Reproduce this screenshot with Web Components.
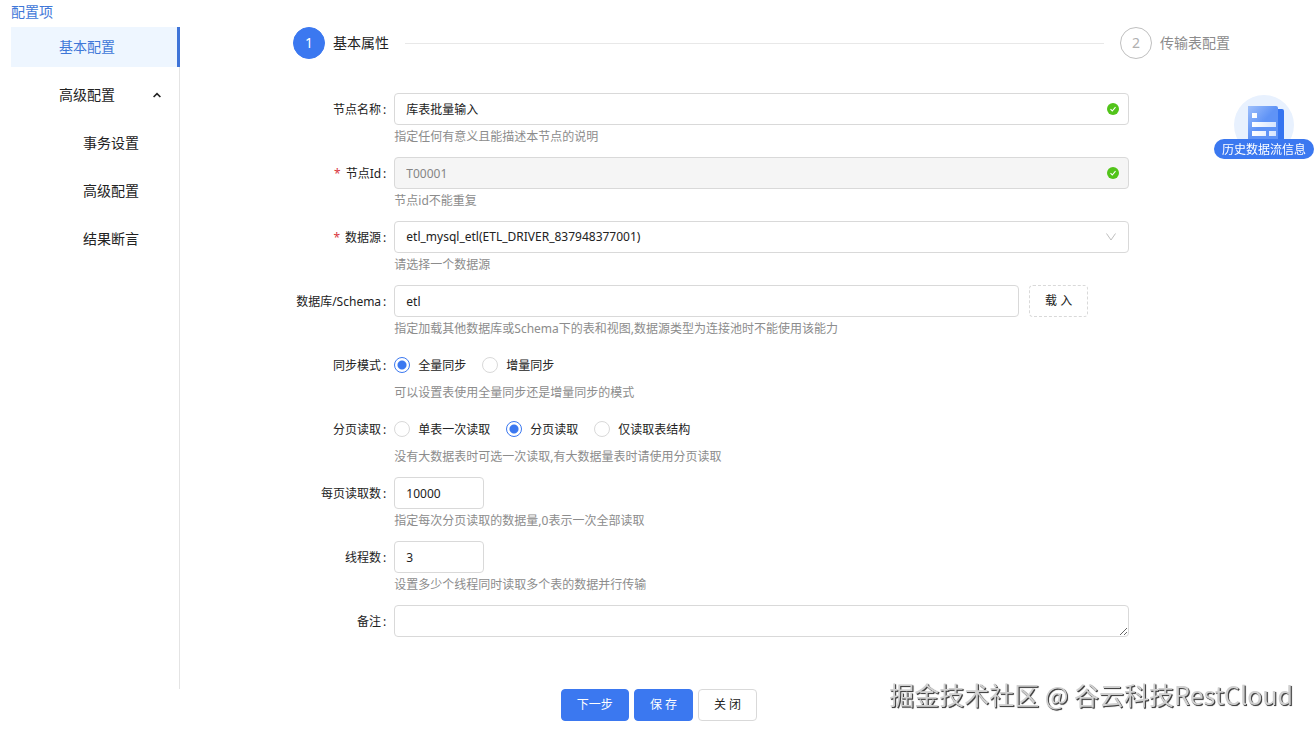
<!DOCTYPE html>
<html lang="zh-CN">
<head>
<meta charset="utf-8">
<title>基本配置</title>
<style>
  body {
    margin: 0;
    background: #fff;
    color: #222;
    font-family: "Noto Sans", "Noto Sans CJK SC", sans-serif;
    font-size: 12px;
    line-height: 24px;
  }
</style>
</head>
<body>
<config-page>
  <side-menu slot="side" heading="配置项">
    <menu-entry active>基本配置</menu-entry>
    <menu-entry arrow>高级配置</menu-entry>
    <menu-entry sub>事务设置</menu-entry>
    <menu-entry sub>高级配置</menu-entry>
    <menu-entry sub>结果断言</menu-entry>
  </side-menu>

  <step-bar></step-bar>
  <text-field label="节点名称" value="库表批量输入" help="指定任何有意义且能描述本节点的说明" valid></text-field>
  <text-field label="节点Id" value="T00001" help="节点id不能重复" required valid disabled></text-field>
  <select-field label="数据源" value="etl_mysql_etl(ETL_DRIVER_837948377001)" help="请选择一个数据源" required></select-field>
  <text-field label="数据库/Schema" value="etl" help="指定加载其他数据库或Schema下的表和视图,数据源类型为连接池时不能使用该能力" action="载 入"></text-field>
  <radio-field label="同步模式" options="全量同步,增量同步" checked="0" help="可以设置表使用全量同步还是增量同步的模式"></radio-field>
  <radio-field label="分页读取" options="单表一次读取,分页读取,仅读取表结构" checked="1" help="没有大数据表时可选一次读取,有大数据量表时请使用分页读取"></radio-field>
  <text-field label="每页读取数" value="10000" help="指定每次分页读取的数据量,0表示一次全部读取" short></text-field>
  <text-field label="线程数" value="3" help="设置多少个线程同时读取多个表的数据并行传输" short></text-field>
  <area-field label="备注"></area-field>

  <ui-button slot="footer" kind="primary">下一步</ui-button>
  <ui-button slot="footer" kind="primary">保 存</ui-button>
  <ui-button slot="footer">关 闭</ui-button>
</config-page>
<history-badge>历史数据流信息</history-badge>
<water-mark>掘金技术社区 @ 谷云科技RestCloud</water-mark>

<script>
class ConfigPage extends HTMLElement {
  connectedCallback() {
    this.attachShadow({ mode: 'open' });
    this.shadowRoot.innerHTML = `
      <style>
        :host {
          display: flex;
          flex-direction: column;
          min-height: 100vh;
        }

        .body {
          flex: 1;
          display: flex;
        }

        main {
          flex: 1;
          padding-top: 27px;
        }

        footer {
          display: flex;
          justify-content: center;
          gap: 5px;
          padding: 0 0 10px 2px;
        }
      </style>
      <div class="body">
        <slot name="side"></slot>
        <main><slot></slot></main>
      </div>
      <footer><slot name="footer"></slot></footer>
    `;
  }
}

class SideMenu extends HTMLElement {
  connectedCallback() {
    this.attachShadow({ mode: 'open' });
    this.shadowRoot.innerHTML = `
      <style>
        :host {
          display: flex;
          flex-direction: column;
          width: 169px;
          padding-left: 11px;
          font-size: 14px;
        }

        .heading {
          padding-bottom: 3px;
          color: #3f78d8;
          line-height: 24px;
        }

        nav {
          flex: 1;
          display: flex;
          flex-direction: column;
          gap: 8px;
          box-shadow: inset -1px 0 #e4e4e4;
        }
      </style>
      <div class="heading">${this.getAttribute('heading')}</div>
      <nav><slot></slot></nav>
    `;
  }
}

class MenuEntry extends HTMLElement {
  connectedCallback() {
    const arrow = this.hasAttribute('arrow')
      ? `<svg width="10" height="10" viewBox="0 0 10 10" fill="none" stroke="#222" stroke-width="1.6">
           <path d="M1.6 7L5 3.6L8.4 7"/>
         </svg>`
      : '';
    this.attachShadow({ mode: 'open' });
    this.shadowRoot.innerHTML = `
      <style>
        :host {
          display: block;
        }

        a {
          display: flex;
          align-items: center;
          justify-content: space-between;
          height: 40px;
          padding: 0 18px 0 48px;
          color: #222;
          text-decoration: none;
        }

        :host([sub]) a {
          padding-left: 72px;
        }

        :host([active]) a {
          background: #eef6ff;
          color: #3f78d8;
          border-right: 3px solid #3f74d8;
          padding-right: 15px;
        }
      </style>
      <a href="#"><slot></slot>${arrow}</a>
    `;
  }
}

class StepBar extends HTMLElement {
  connectedCallback() {
    this.attachShadow({ mode: 'open' });
    this.shadowRoot.innerHTML = `
      <style>
        :host {
          display: flex;
          align-items: center;
          margin: 0 86px 34px 113px;
          font-size: 14px;
        }

        .num {
          box-sizing: border-box;
          width: 32px;
          height: 32px;
          margin-right: 8px;
          border: 1px solid #bfbfbf;
          border-radius: 50%;
          line-height: 30px;
          text-align: center;
          color: #b0b0b0;
        }

        .num.on {
          background: #3b78f0;
          border-color: #3b78f0;
          color: #fff;
        }

        .line {
          flex: 1;
          height: 1px;
          margin: 0 16px;
          background: #e8e8e8;
        }

        .wait {
          color: #8c8c8c;
        }
      </style>
      <span class="num on">1</span><span>基本属性</span>
      <span class="line"></span>
      <span class="num">2</span><span class="wait">传输表配置</span>
    `;
  }
}

// Shared row: label column, control column, help text under the control
class FormField extends HTMLElement {
  connectedCallback() {
    const help = this.getAttribute('help');
    const star = this.hasAttribute('required') ? '<span class="star">*</span>' : '';
    const label = `${star}${this.getAttribute('label')}<span class="colon">:</span>`;
    this.attachShadow({ mode: 'open' });
    this.shadowRoot.innerHTML = `
      <style>
        :host {
          display: grid;
          grid-template-columns: 4fr 18fr 2fr;
          margin: 0 105px 8px 51px;
        }

        .label {
          line-height: 34px;
          text-align: right;
          white-space: nowrap;
        }

        .star {
          margin-right: 5px;
          color: #d9363e;
        }

        .colon {
          margin: 0 8px 0 2px;
        }

        .row {
          display: flex;
          align-items: center;
          gap: 10px;
          height: 32px;
        }

        .help {
          height: 24px;
          color: #8c8c8c;
        }

        .box {
          box-sizing: border-box;
          flex: 1;
          display: flex;
          align-items: center;
          height: 32px;
          border: 1px solid #d9d9d9;
          border-radius: 4px;
          overflow: hidden;
        }

        .box svg {
          flex: none;
          margin-right: 9px;
        }

        input, select, textarea {
          font: inherit;
          color: inherit;
        }

        .box input, .box select {
          flex: 1;
          min-width: 0;
          height: 30px;
          padding: 0 11px;
          border: 0;
          outline: 0;
          background: transparent;
          appearance: none;
        }

        :host([disabled]) .box {
          background: #f5f5f5;
          color: #858585;
        }

        :host([short]) .box {
          flex: none;
          width: 90px;
        }

        .row.split {
          display: grid;
          grid-template-columns: 85% auto;
          justify-content: start;
        }

        .option {
          display: flex;
          align-items: center;
          gap: 8px;
          margin-right: 6px;
          line-height: 34px;
        }

        .option span {
          padding-top: 1px;
        }

        .option input {
          width: 16px;
          height: 16px;
          margin: 0;
          border: 1px solid #d9d9d9;
          border-radius: 50%;
          appearance: none;
        }

        .option input:checked {
          border-color: #3b78f0;
          background: radial-gradient(circle, #3b78f0 4px, #fff 5px);
        }

        textarea {
          box-sizing: border-box;
          display: block;
          width: 100%;
          height: 32px;
          padding: 3px 11px;
          border: 1px solid #d9d9d9;
          border-radius: 4px;
          resize: vertical;
        }
      </style>
      ${this.grouped
        ? `<span class="label" id="label">${label}</span>`
        : `<label class="label" for="control">${label}</label>`}
      <div>
        ${this.control()}
        ${help ? `<div class="help">${help}</div>` : ''}
      </div>
    `;
  }
}

class TextField extends FormField {
  control() {
    const action = this.getAttribute('action');
    const disabled = this.hasAttribute('disabled') ? 'disabled' : '';
    const check = this.hasAttribute('valid')
      ? `<svg width="12" height="12" viewBox="0 0 12 12" fill="none">
           <circle cx="6" cy="6" r="6" fill="#52c41a"/>
           <path d="M3.5 6.1L5.3 8L8.5 4.2" stroke="#fff" stroke-width="1.1"/>
         </svg>`
      : '';
    return `
      <div class="row ${action ? 'split' : ''}">
        <div class="box">
          <input id="control" type="text" value="${this.getAttribute('value')}" ${disabled}>${check}
        </div>
        ${action ? `<ui-button kind="dashed">${action}</ui-button>` : ''}
      </div>
    `;
  }
}

class SelectField extends FormField {
  control() {
    return `
      <div class="row">
        <div class="box">
          <select id="control"><option>${this.getAttribute('value')}</option></select>
          <svg width="16" height="12" viewBox="0 0 16 12" fill="none" stroke="#bfbfbf">
            <path d="M3.5 2.5L8 9L12.5 2.5"/>
          </svg>
        </div>
      </div>
    `;
  }
}

class RadioField extends FormField {
  get grouped() {
    return true;
  }

  control() {
    const checked = Number(this.getAttribute('checked'));
    const options = this.getAttribute('options').split(',').map((text, i) => `
      <label class="option"><input type="radio" name="mode" ${i === checked ? 'checked' : ''}><span>${text}</span></label>
    `).join('');
    return `<div class="row" role="radiogroup" aria-labelledby="label">${options}</div>`;
  }
}

class AreaField extends FormField {
  control() {
    return '<textarea id="control" rows="1"></textarea>';
  }
}

class UiButton extends HTMLElement {
  connectedCallback() {
    this.attachShadow({ mode: 'open' });
    this.shadowRoot.innerHTML = `
      <style>
        :host {
          display: block;
        }

        button {
          height: 32px;
          padding: 0 15px;
          border: 1px solid #d9d9d9;
          border-radius: 4px;
          background: #fff;
          color: #222;
          font: inherit;
          line-height: 30px;
          white-space: nowrap;
          cursor: pointer;
        }

        :host([kind="primary"]) button {
          background: #3b78f0;
          border-color: #3b78f0;
          color: #fff;
        }

        :host([kind="dashed"]) button {
          border-style: dashed;
        }
      </style>
      <button type="button"><slot></slot></button>
    `;
  }
}

class HistoryBadge extends HTMLElement {
  connectedCallback() {
    this.attachShadow({ mode: 'open' });
    this.shadowRoot.innerHTML = `
      <style>
        :host {
          display: block;
          position: fixed;
          top: 95px;
          right: 2px;
        }

        button {
          display: flex;
          flex-direction: column;
          align-items: center;
          padding: 0;
          border: 0;
          background: none;
          color: #fff;
          font: inherit;
          cursor: pointer;
        }

        svg {
          display: block;
        }

        span {
          padding: 2px 8px 0;
          border-radius: 10px;
          background: #3b78f0;
          line-height: 18px;
        }
      </style>
      <button type="button">
        <svg width="60" height="44" viewBox="0 0 60 44">
          <defs>
            <linearGradient id="page" x1="0" y1="0" x2="1" y2="1">
              <stop offset="0" stop-color="#9fc0fb"/>
              <stop offset="0.5" stop-color="#5f93f6"/>
              <stop offset="1" stop-color="#5f93f6"/>
            </linearGradient>
            <linearGradient id="lines" x1="0" y1="0" x2="1" y2="0">
              <stop offset="0" stop-color="#fff"/>
              <stop offset="1" stop-color="#d6e4fe"/>
            </linearGradient>
          </defs>
          <circle cx="30" cy="30" r="30" fill="#e8f1fe"/>
          <path d="M40 14H48Q50 14 50 16V44H40Z" fill="#3574f0"/>
          <path d="M14 11H42Q44 11 44 13V44H14Z" fill="url(#page)"/>
          <path d="M18 18H23V23H18ZM18 27H42V32H18ZM18 36H32V41H18ZM35 36H42V41H35Z" fill="url(#lines)"/>
        </svg>
        <span><slot></slot></span>
      </button>
    `;
  }
}

class WaterMark extends HTMLElement {
  connectedCallback() {
    this.attachShadow({ mode: 'open' });
    this.shadowRoot.innerHTML = `
      <style>
        :host {
          display: block;
          position: fixed;
          right: 23px;
          bottom: 19px;
          color: #d0d0d0;
          font-family: "Noto Sans CJK SC", sans-serif;
          font-size: 25px;
          line-height: 36px;
          text-shadow: 1px 1px 0 #444, 1px 1px 1px #444;
          pointer-events: none;
        }
      </style>
      <slot></slot>
    `;
  }
}

customElements.define('config-page', ConfigPage);
customElements.define('side-menu', SideMenu);
customElements.define('menu-entry', MenuEntry);
customElements.define('step-bar', StepBar);
customElements.define('text-field', TextField);
customElements.define('select-field', SelectField);
customElements.define('radio-field', RadioField);
customElements.define('area-field', AreaField);
customElements.define('ui-button', UiButton);
customElements.define('history-badge', HistoryBadge);
customElements.define('water-mark', WaterMark);
</script>
</body>
</html>
